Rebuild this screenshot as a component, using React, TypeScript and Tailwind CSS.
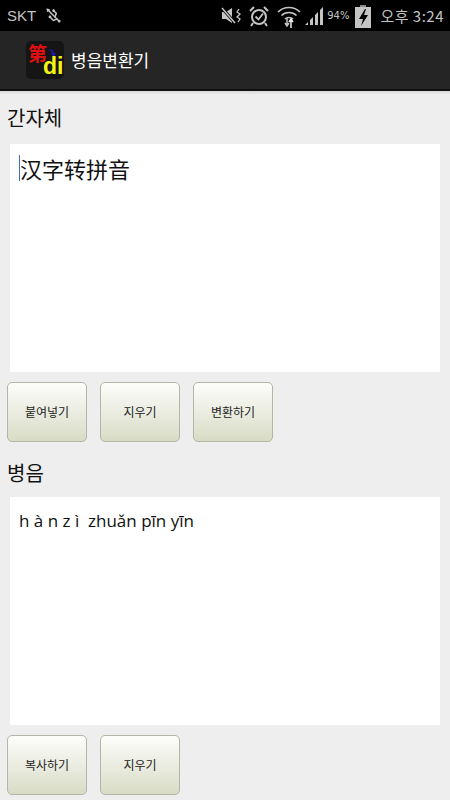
import { Usb } from "lucide-react";

const cjk = "font-['Noto_Sans_CJK_KR','Noto_Sans_CJK_SC',sans-serif]";

function StatusIcons() {
  return (
    <div className="flex items-center text-[#c4c4c4]">
      {/* mute + vibrate */}
      <svg width="24" height="22" viewBox="0 0 24 22" fill="none" className="mr-[3px]">
        <path d="M1 7h4l6-4v15l-6-4H1z" fill="currentColor" />
        <path d="M1 3l14 16" stroke="#000" strokeWidth="3" />
        <path d="M1 3l13 15" stroke="currentColor" strokeWidth="1.5" />
        <path d="M18 4l-2 3 3 2-3 3 3 2-2 3" stroke="currentColor" strokeWidth="1.3" />
      </svg>
      {/* alarm */}
      <svg width="22" height="22" viewBox="0 0 22 22" fill="none" stroke="currentColor" className="mr-[7px]">
        <circle cx="11" cy="12" r="7" strokeWidth="2" />
        <path d="M7.5 11.5l3 3 4.5-6" strokeWidth="1.8" />
        <path d="M2 6l4-4M20 6l-4-4M5 18l-2 3M17 18l2 3" strokeWidth="2" />
      </svg>
      {/* wifi */}
      <svg width="24" height="24" viewBox="0 0 24 24" fill="none" stroke="currentColor" strokeWidth="1.7" className="mr-[3px]">
        <path d="M1 8c6-6 16-6 22 0M4.500 11.500c4-4 11-4 15 0M8 15c2-2 6-2 8 0" />
        <path d="M10 14v7M8 19l2 3 2-3" strokeWidth="1.500" />
        <path d="M14 24v-8M12 18l2-3 2 3" stroke="#eee" strokeWidth="1.500" />
      </svg>
      {/* signal */}
      <svg width="20" height="22" viewBox="0 0 20 22" fill="currentColor" className="mr-[3px]">
        <path d="M1 20l3-3v3zM6 20v-5l3-3v8zM11 20V10l3-3v13zM16 20V5l3-3v18z" />
      </svg>
      <span className="mr-[6px] font-['DejaVu_Sans',sans-serif] text-[10px] leading-none">94%</span>
      {/* battery */}
      <svg width="16" height="24" viewBox="0 0 16 24" className="mr-[9px]">
        <path d="M5 1h6v2H5z" fill="#8a8a8a" />
        <path d="M0 3h16v21H0z" fill="#c4c4c4" />
        <path d="M10 5L4 15h4l-2 7 7-11H9l2-6z" fill="#000" />
      </svg>
      <span className={`${cjk} text-[15px] leading-none tracking-[0.5px]`}>오후 3:24</span>
    </div>
  );
}

function AppLogo() {
  return (
    <div className="relative h-[38px] w-[38px] overflow-hidden rounded-[5px] bg-[#151515]">
      <span className={`absolute left-[2px] top-[1px] font-['Noto_Sans_CJK_SC',sans-serif] text-[19px] font-bold leading-[22px] text-[#e01010]`}>
        第
      </span>
      <svg width="10" height="10" viewBox="0 0 10 10" className="absolute left-[21px] top-[7px]">
        <path d="M1 1l5 1 1 3 2 0-2 4-3-3 1-1-1-2z" fill="#1a1ab0" />
      </svg>
      <span className="absolute left-[17px] top-[13px] font-['Liberation_Sans',sans-serif] text-[23px] font-bold leading-[24px] text-[#f4f414]">
        di
      </span>
    </div>
  );
}

function GlossyButton({ label }: { label: string }) {
  return (
    <button className={`${cjk} h-[60px] w-[80px] rounded-[5px] border border-[#b4b5a6] bg-gradient-to-b from-[#fdfdfb] to-[#d8dcc6] text-[12px] text-[#222]`}>
      {label}
    </button>
  );
}

export default function App() {
  return (
    <div className="flex h-[800px] w-[450px] flex-col overflow-hidden bg-[#eeeeee]">
      {/* Status bar */}
      <div className="flex h-[31px] items-center justify-between bg-black pl-[7px] pr-[6px] text-[#c4c4c4]">
        <div className="flex items-center gap-[9px]">
          <span className="font-['Liberation_Sans',sans-serif] text-[15px] leading-none">SKT</span>
          <Usb size={17} strokeWidth={2} className="-rotate-90" />
        </div>
        <StatusIcons />
      </div>

      {/* Action bar */}
      <div className="flex h-[60px] items-center border-b-2 border-[#111] bg-[#252525] pl-[26px]">
        <AppLogo />
        <span className={`${cjk} ml-[7px] text-[17px] text-white`}>병음변환기</span>
      </div>

      <div className="bg-gradient-to-b from-[#d8d8d8] to-[#eeeeee] h-[4px]" />

      {/* Simplified */}
      <div className="flex flex-1 flex-col px-[7px]">
        <h2 className={`${cjk} mt-[8px] text-[20px] font-normal leading-[29px] text-[#111]`}>간자체</h2>
        <div className="mx-[3px] mt-[12px] h-[228px] bg-white px-[9px] pt-[10px]">
          <div className="flex items-start">
            <span className="mt-[1px] h-[26px] w-px bg-[#3a6fc4]" />
            <span className={`font-['Noto_Sans_CJK_SC',sans-serif] text-[22px] leading-[28px] text-[#111]`}>汉字转拼音</span>
          </div>
        </div>
        <div className="mt-[10px] flex gap-[13px]">
          <GlossyButton label="붙여넣기" />
          <GlossyButton label="지우기" />
          <GlossyButton label="변환하기" />
        </div>

        {/* Pinyin */}
        <h2 className={`${cjk} mt-[16px] text-[20px] font-normal leading-[29px] text-[#111]`}>병음</h2>
        <div className="mx-[3px] mt-[10px] h-[228px] bg-white px-[9px] pt-[12px]">
          <span className="font-['Open_Sans',sans-serif] text-[17px] leading-[24px] text-[#111]">
            h à n z ì&nbsp; zhuǎn pīn yīn
          </span>
        </div>
        <div className="mt-[10px] flex gap-[13px]">
          <GlossyButton label="복사하기" />
          <GlossyButton label="지우기" />
        </div>
      </div>
    </div>
  );
}
